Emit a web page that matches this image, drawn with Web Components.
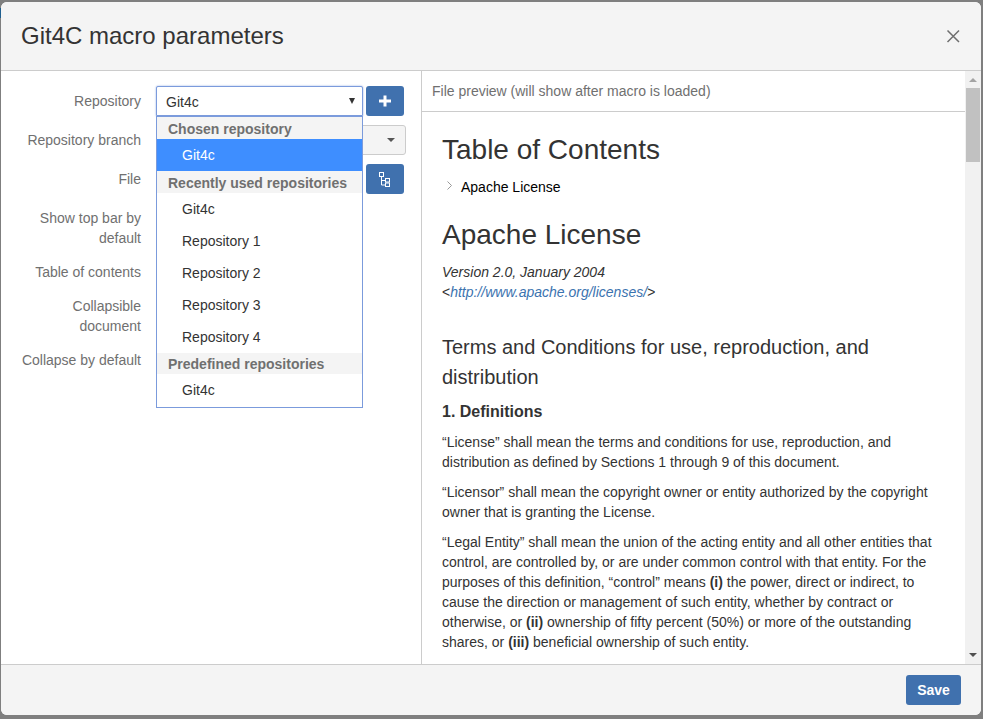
<!DOCTYPE html>
<html>
<head>
<meta charset="utf-8">
<title>Git4C macro parameters</title>
<style>
  html, body { margin: 0; height: 719px; overflow: hidden; }
  html { background: linear-gradient(#1f5f8f, #1f5f8f) 0 8px / 1px 10px no-repeat, #7f7f7f; }
  body { font-family: "Liberation Sans", Arial, sans-serif; font-size: 14px; line-height: 20px; color: #333; }
</style>
</head>
<body>

<macro-dialog heading="Git4C macro parameters">
  <macro-form slot="left"></macro-form>
  <file-preview slot="right"></file-preview>
</macro-dialog>

<script>
class MacroDialog extends HTMLElement {
  constructor() {
    super();
    this.attachShadow({ mode: 'open' });
    this.shadowRoot.innerHTML = `
    <style>
      :host { display: flex; flex-direction: column; box-sizing: border-box; width: 980px; height: 713px; margin: 2px 0 0 1px; background: #fff; border-radius: 6px; overflow: hidden; }
      header { flex: none; box-sizing: border-box; height: 69px; display: flex; align-items: center; justify-content: space-between; padding: 0 21px 0 20px; background: #f4f4f4; border-bottom: 1px solid #ccc; }
      h4 { margin: 0; font-size: 24px; line-height: 30px; font-weight: normal; color: #333; }
      svg { display: block; }
      main { flex: 1; min-height: 0; display: flex; }
      .left { flex: none; box-sizing: border-box; width: 421px; border-right: 1px solid #ccc; }
      .right { flex: 1; min-width: 0; }
      footer { flex: none; box-sizing: border-box; height: 51px; display: flex; align-items: center; justify-content: flex-end; padding: 0 20px; background: #f4f4f4; border-top: 1px solid #ccc; }
      button { box-sizing: border-box; width: 55px; height: 30px; padding: 0; border: 0; border-radius: 3px; background: #4071ae; color: #fff; font: bold 14px "Liberation Sans", Arial, sans-serif; }
    </style>
    <header>
      <h4></h4>
      <svg width="14" height="14" viewBox="0 0 14 14"><path d="M1.5 1.5l11.5 11.5M13 1.5L1.5 13" stroke="#6e6e6e" stroke-width="1.5" fill="none"/></svg>
    </header>
    <main>
      <div class="left"><slot name="left"></slot></div>
      <div class="right"><slot name="right"></slot></div>
    </main>
    <footer><button>Save</button></footer>`;
    this.shadowRoot.querySelector('h4').innerText = this.getAttribute('heading');
  }
}

const formTemplate = document.createElement('template');
formTemplate.innerHTML = `
<style>
  :host { display: block; position: relative; box-sizing: border-box; height: 100%; padding-top: 15px; }
  repo-dropdown { position: absolute; left: 155px; top: 15px; z-index: 2; }
  .addon { display: flex; align-items: center; justify-content: center; position: absolute; left: 365px; width: 38px; height: 30px; background: #4071ae; border-radius: 3px; }
  .addon.add { top: 15px; }
  .addon.tree { top: 93px; }
  .behind { position: absolute; left: 300px; top: 54px; box-sizing: border-box; width: 105px; height: 30px; background: #f4f4f4; border: 1px solid #ccc; border-radius: 3px; }
  .behind i { position: absolute; right: 10px; top: 12px; width: 0; height: 0; border: 4px solid transparent; border-top: 4px solid #555; border-bottom: 0; }
</style>
<form-row>Repository</form-row>
<form-row>Repository branch</form-row>
<form-row>File</form-row>
<form-row tight>Show top bar by default</form-row>
<form-row tight>Table of contents</form-row>
<form-row tight>Collapsible document</form-row>
<form-row tight>Collapse by default</form-row>
<div class="behind"><i></i></div>
<div class="addon add"><svg width="12" height="12" viewBox="0 0 12 12"><path d="M6 .5v11M0 6h12" stroke="#fff" stroke-width="3" fill="none"/></svg></div>
<div class="addon tree"><svg width="12" height="15" viewBox="0 0 12 15" fill="none" stroke="#fff" stroke-width="1"><rect x="0.5" y="0.5" width="4" height="4"/><rect x="6.5" y="6.5" width="4" height="3.5"/><rect x="6.5" y="11" width="4" height="3.5"/><path d="M2.5 4.5v8.5h4M2.5 8.5h4"/></svg></div>
<repo-dropdown value="Git4c"></repo-dropdown>`;

class MacroForm extends HTMLElement {
  constructor() {
    super();
    this.attachShadow({ mode: 'open' });
    this.shadowRoot.appendChild(formTemplate.content.cloneNode(true));
  }
}

class FormRow extends HTMLElement {
  constructor() {
    super();
    this.attachShadow({ mode: 'open' });
    this.shadowRoot.innerHTML = `
    <style>
      :host { display: block; box-sizing: border-box; width: 140px; padding: 5px 0 5px 15px; margin-bottom: 9px; text-align: right; color: #707070; }
      :host([tight]) { margin-bottom: 4px; }
    </style>
    <slot></slot>`;
  }
}

const dropdownTemplate = document.createElement('template');
dropdownTemplate.innerHTML = `
<style>
  :host { display: block; width: 207px; }
  .value { position: relative; box-sizing: border-box; height: 30px; padding: 5px 9px; border: 1px solid #7b9bdc; border-radius: 2px 2px 0 0; background: #fff; box-shadow: 0 0 2px #8fa9e0; color: #333; }
  .value i { position: absolute; right: 7px; top: 11px; width: 0; height: 0; border-style: solid; border-width: 6px 3px 0; border-color: #333 transparent transparent; }
  .list { position: relative; box-sizing: border-box; height: 292px; border: 1px solid #7b9bdc; background: #fff; color: #333; }
  .group { height: 22px; padding-left: 11px; background: #f4f4f4; color: #707070; font-weight: bold; line-height: 24px; }
  .group.short { height: 21px; line-height: 23px; }
  .opt { height: 32px; padding-left: 25px; line-height: 32px; }
  .opt.on { background: #3e8eff; color: #fff; }
</style>
<div class="value"><span></span><i></i></div>
<div class="list">
  <div class="group">Chosen repository</div>
  <div class="opt on">Git4c</div>
  <div class="group">Recently used repositories</div>
  <div class="opt">Git4c</div>
  <div class="opt">Repository 1</div>
  <div class="opt">Repository 2</div>
  <div class="opt">Repository 3</div>
  <div class="opt">Repository 4</div>
  <div class="group short">Predefined repositories</div>
  <div class="opt">Git4c</div>
</div>`;

class RepoDropdown extends HTMLElement {
  constructor() {
    super();
    this.attachShadow({ mode: 'open' });
    this.shadowRoot.appendChild(dropdownTemplate.content.cloneNode(true));
    this.shadowRoot.querySelector('.value span').innerText = this.getAttribute('value');
  }
}

const previewTemplate = document.createElement('template');
previewTemplate.innerHTML = `
<style>
  :host { display: flex; height: 100%; }
  .pane { flex: 1; min-width: 0; display: flex; flex-direction: column; }
  .title { flex: none; box-sizing: border-box; height: 41px; padding: 10px 10px; border-bottom: 1px solid #ccc; color: #707070; }
  .doc { flex: 1; min-height: 0; overflow: hidden; padding: 0 20px; }
  h1 { margin: 20px 0 9px; font-size: 28px; line-height: 36px; font-weight: normal; color: #333; }
  h2 { margin: 30px 0 10px; font-size: 20px; line-height: 30px; font-weight: normal; color: #333; }
  h3 { margin: 0 0 10px; font-size: 16px; line-height: 20px; font-weight: bold; color: #333; }
  p { margin: 0 0 10px; }
  a { color: #3b73af; text-decoration: none; }
  .toc { display: flex; align-items: center; margin: 0 0 20px; padding-left: 5px; color: #000; }
  .toc svg { margin: -4px 9px 0 0; }
  .bar { flex: none; position: relative; width: 16px; background: #f1f1f1; }
  .bar i { position: absolute; left: 4px; width: 0; height: 0; border-left: 4px solid transparent; border-right: 4px solid transparent; }
  .bar .up { top: 7px; border-bottom: 4px solid #a3a3a3; }
  .bar .down { bottom: 7px; border-top: 4px solid #505050; }
  .thumb { position: absolute; left: 1px; top: 17px; width: 14px; height: 74px; background: #c1c1c1; }
</style>
<div class="pane">
  <div class="title">File preview (will show after macro is loaded)</div>
  <div class="doc">
    <h1>Table of Contents</h1>
    <div class="toc"><svg width="5" height="9" viewBox="0 0 5 9"><path d="M.5.5l4 4-4 4" stroke="#999" fill="none"/></svg>Apache License</div>
    <h1>Apache License</h1>
    <p><em>Version 2.0, January 2004</em><br>&lt;<a href="#"><em>http://www.apache.org/licenses/</em></a><em>&gt;</em></p>
    <h2>Terms and Conditions for use, reproduction, and distribution</h2>
    <h3>1. Definitions</h3>
    <p>“License” shall mean the terms and conditions for use, reproduction, and distribution as defined by Sections 1 through 9 of this document.</p>
    <p>“Licensor” shall mean the copyright owner or entity authorized by the copyright owner that is granting the License.</p>
    <p>“Legal Entity” shall mean the union of the acting entity and all other entities that control, are controlled by, or are under common control with that entity. For the purposes of this definition, “control” means <b>(i)</b> the power, direct or indirect, to cause the direction or management of such entity, whether by contract or otherwise, or <b>(ii)</b> ownership of fifty percent (50%) or more of the outstanding shares, or <b>(iii)</b> beneficial ownership of such entity.</p>
  </div>
</div>
<div class="bar"><i class="up"></i><div class="thumb"></div><i class="down"></i></div>`;

class FilePreview extends HTMLElement {
  constructor() {
    super();
    this.attachShadow({ mode: 'open' });
    this.shadowRoot.appendChild(previewTemplate.content.cloneNode(true));
  }
}

customElements.define('macro-dialog', MacroDialog);
customElements.define('macro-form', MacroForm);
customElements.define('form-row', FormRow);
customElements.define('repo-dropdown', RepoDropdown);
customElements.define('file-preview', FilePreview);
</script>
</body>
</html>
